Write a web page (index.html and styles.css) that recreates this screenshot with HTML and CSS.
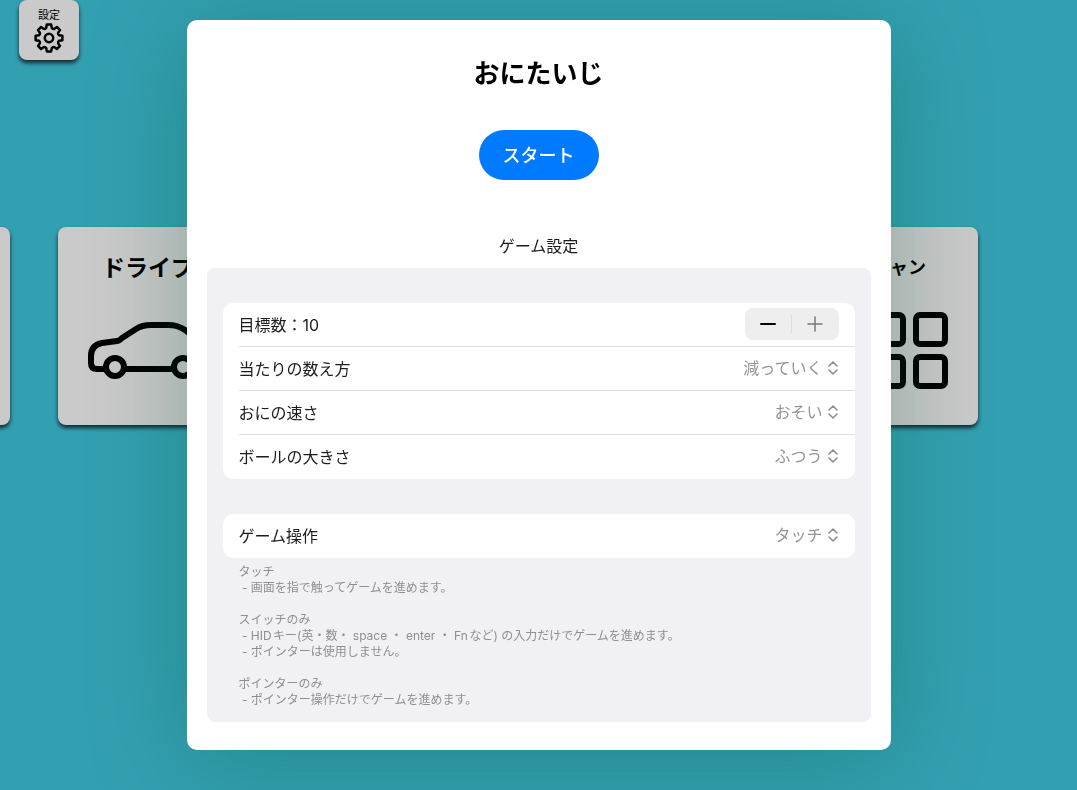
FILE: index.html
```html
<!DOCTYPE html>
<html lang="ja">
<head>
  <meta charset="UTF-8" />
  <meta name="viewport" content="width=device-width, initial-scale=1" />
  <title>おにたいじ</title>
  <link rel="stylesheet" href="styles.css">
</head>
<body>
  <header class="topbar">
    <button type="button" class="settings-btn">
      設定
      <svg class="gear" viewBox="0 0 30 30" aria-hidden="true">
        <path d="M12.8 1.6H17.2L17.8 4.9Q19 6.3 20.2 5.9L22.9 4L26 7.1L24.1 9.8Q23.7 11 25.1 12.2L28.4 12.8V17.2L25.1 17.8Q23.7 19 24.1 20.2L26 22.9L22.9 26L20.2 24.1Q19 23.7 17.8 25.1L17.2 28.4H12.8L12.2 25.1Q11 23.7 9.8 24.1L7.1 26L4 22.9L5.9 20.2Q6.3 19 4.9 17.8L1.6 17.2V12.8L4.9 12.2Q6.3 11 5.9 9.8L4 7.1L7.1 4L9.8 5.9Q11 6.3 12.2 4.9Z" />
        <circle cx="15" cy="15" r="4.2" />
      </svg>
    </button>
  </header>

  <main class="games">
    <div class="game"></div>
    <div class="game">
      <h2>ドライブ</h2>
      <svg class="car" viewBox="0 0 134 58" aria-hidden="true">
        <path d="M17 47H9Q3 47 3 41V34Q3 23 14 21L29 19Q31 19 34 16L48 7Q54 3 63 3H80Q90 3 97 8L111 19L122 22Q131 24 131 33V41Q131 47 125 47H107M39 47H83" />
        <circle cx="27" cy="45" r="9" />
        <circle cx="95" cy="45" r="9" />
      </svg>
    </div>
    <div class="game"></div>
    <div class="game"></div>
    <div class="game game-grid">
      <h2>ャン</h2>
      <svg class="tiles" viewBox="0 0 118 77" aria-hidden="true">
        <rect x="3" y="3" width="29" height="29" rx="4" />
        <rect x="44" y="3" width="29" height="29" rx="4" />
        <rect x="86" y="3" width="29" height="29" rx="4" />
        <rect x="3" y="45" width="29" height="29" rx="4" />
        <rect x="44" y="45" width="29" height="29" rx="4" />
        <rect x="86" y="45" width="29" height="29" rx="4" />
      </svg>
    </div>
  </main>

  <div class="overlay">
    <form class="modal" role="dialog" aria-labelledby="title">
      <h1 id="title">おにたいじ</h1>
      <button type="button" class="start-btn">スタート</button>
      <h3>ゲーム設定</h3>

      <div class="panel">
        <div class="list">
          <div class="row">
            <span>目標数：<output id="count">10</output></span>
            <div class="stepper">
              <button type="button" id="minus" aria-label="減らす">
                <svg viewBox="0 0 16 16"><path d="M1 8H15" /></svg>
              </button>
              <button type="button" id="plus" aria-label="増やす">
                <svg viewBox="0 0 16 16"><path d="M1 8H15M8 1V15" /></svg>
              </button>
            </div>
          </div>
          <div class="row">
            <label for="counting">当たりの数え方</label>
            <select id="counting"><option>減っていく</option></select>
            <svg class="chevron" viewBox="0 0 12 14"><path d="M2 5L6 1L10 5M2 9L6 13L10 9" /></svg>
          </div>
          <div class="row">
            <label for="speed">おにの速さ</label>
            <select id="speed"><option>おそい</option></select>
            <svg class="chevron" viewBox="0 0 12 14"><path d="M2 5L6 1L10 5M2 9L6 13L10 9" /></svg>
          </div>
          <div class="row">
            <label for="size">ボールの大きさ</label>
            <select id="size"><option>ふつう</option></select>
            <svg class="chevron" viewBox="0 0 12 14"><path d="M2 5L6 1L10 5M2 9L6 13L10 9" /></svg>
          </div>
        </div>

        <div class="list">
          <div class="row">
            <label for="control">ゲーム操作</label>
            <select id="control"><option>タッチ</option></select>
            <svg class="chevron" viewBox="0 0 12 14"><path d="M2 5L6 1L10 5M2 9L6 13L10 9" /></svg>
          </div>
        </div>

        <div class="notes">
          <p>タッチ
 - 画面を指で触ってゲームを進めます。</p>
          <p>スイッチのみ
 - HIDキー(英・数・ space ・ enter ・ Fnなど) の入力だけでゲームを進めます。
 - ポインターは使用しません。</p>
          <p>ポインターのみ
 - ポインター操作だけでゲームを進めます。</p>
        </div>
      </div>
    </form>
  </div>

  <script>
    const count = document.getElementById("count");

    function step(n) {
      const next = Number(count.textContent) + n;
      if (next >= 1) count.textContent = next;
    }

    document.getElementById("minus").addEventListener("click", () => step(-1));
    document.getElementById("plus").addEventListener("click", () => step(1));
  </script>
</body>
</html>
```
FILE: styles.css
```css
* {
  box-sizing: border-box;
}

body {
  margin: 0;
  min-height: 100vh;
  overflow: hidden;
  background: #33a0b2;
  color: #000;
  font-family: Inter, "Noto Sans CJK JP", sans-serif;
  font-size: 16px;
}

h1, h2, h3, p {
  margin: 0;
}

button, select {
  font: inherit;
  border: none;
  cursor: pointer;
}

svg {
  display: block;
  flex: none;
  fill: none;
  stroke: currentColor;
  stroke-linecap: round;
  stroke-linejoin: round;
}

/* screen behind the dialog */
.topbar {
  padding: 0 19px;
}

.settings-btn {
  display: flex;
  flex-direction: column;
  align-items: center;
  width: 60px;
  height: 60px;
  padding: 7px 0;
  border-radius: 8px;
  background: #cacaca;
  color: #000;
  font-size: 11px;
  line-height: 16px;
  box-shadow: 0 3px 4px rgba(0, 0, 0, 0.75);
}

.gear {
  width: 30px;
  height: 30px;
  stroke-width: 2.5;
}

.games {
  display: flex;
  gap: 48px;
  margin-top: 167px;
  margin-left: -184px;
}

.game {
  display: flex;
  flex: none;
  flex-direction: column;
  align-items: center;
  width: 194px;
  height: 198px;
  padding: 24px 30px;
  border-radius: 8px;
  background: #cacaca;
  box-shadow: 0 3px 4px rgba(0, 0, 0, 0.75);
}

.game h2 {
  align-self: flex-start;
  padding-left: 14px;
  font-size: 23px;
  line-height: 34px;
}

.game-grid h2 {
  align-self: flex-end;
  padding-right: 22px;
  font-size: 18px;
}

.car {
  width: 134px;
  margin-top: 37px;
  stroke-width: 6;
}

.tiles {
  width: 118px;
  margin-top: 27px;
  align-self: flex-end;
  stroke-width: 6;
}

/* dialog */
.overlay {
  position: fixed;
  inset: 0;
  display: flex;
  justify-content: center;
  align-items: flex-start;
  padding: 20px;
  overflow: auto;
}

.modal {
  display: flex;
  flex-direction: column;
  align-items: center;
  width: 100%;
  max-width: 704px;
  padding: 35px 20px 28px;
  border-radius: 10px;
  background: #fff;
  box-shadow: 0 10px 100px rgba(0, 80, 50, 0.32);
}

.modal h1 {
  font-size: 26px;
  line-height: 38px;
}

.start-btn {
  width: 120px;
  height: 50px;
  margin: 37px 0 54px;
  padding: 0 0 2px;
  border-radius: 25px;
  background: #007aff;
  color: #fff;
  font-size: 18px;
  font-weight: 500;
}

.modal h3 {
  margin-bottom: 10px;
  color: #1c1c1e;
  font-size: 16px;
  font-weight: 400;
  line-height: 24px;
}

.panel {
  width: 100%;
  padding: 35px 16px 14px;
  border-radius: 8px;
  background: #f1f0f5;
}

.list {
  border-radius: 10px;
  background: #fff;
  color: #1c1c1e;
}

.list + .list {
  margin-top: 35px;
}

.row {
  display: flex;
  align-items: center;
  gap: 4px;
  height: 44px;
  margin-left: 16px;
  padding: 0 16px 2px 0;
}

.row:not(:last-child) {
  padding-bottom: 1px;
  border-bottom: 1px solid #dddde0;
}

.row > :first-child {
  margin-right: auto;
}

.row select {
  appearance: none;
  padding: 0;
  background: none;
  color: #949496;
  text-align: right;
}

.chevron {
  width: 12px;
  height: 14px;
  color: #8e8e90;
  stroke-width: 1.6;
  pointer-events: none;
}

.stepper {
  display: flex;
  width: 94px;
  height: 32px;
  padding: 7px 0;
  border-radius: 8px;
  background: #eee;
}

.stepper button {
  display: flex;
  flex: 1;
  align-items: center;
  justify-content: center;
  padding: 0;
  background: none;
  color: #000;
}

.stepper button + button {
  border-left: 1px solid #dcdcdc;
  color: #777;
}

.stepper svg {
  width: 16px;
  height: 16px;
  stroke-width: 2;
}

.stepper button + button svg {
  stroke-width: 1.5;
}

.notes {
  display: flex;
  flex-direction: column;
  gap: 16px;
  padding: 6px 16px 0;
  color: #8e8e93;
  font-size: 12px;
  line-height: 16px;
  text-autospace: normal;
}

.notes p {
  white-space: pre-wrap;
}
```
